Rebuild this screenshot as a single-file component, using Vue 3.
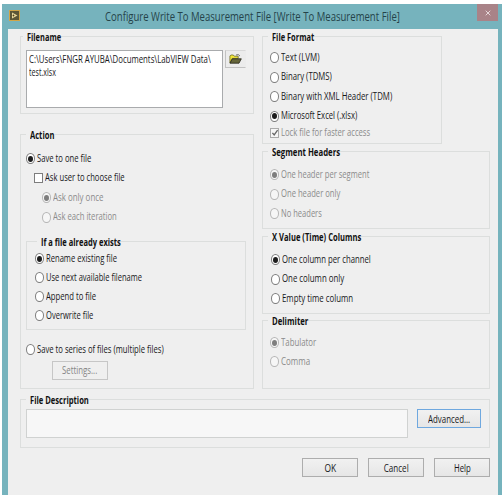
<template>
  <div class="window">
    <header class="titlebar">
      <svg class="app-icon" viewBox="0 0 11 11">
        <rect x="0.5" y="0.5" width="10" height="10" fill="#5d5636" stroke="#d0a548" />
        <path d="M3 2.5 L8.5 5.5 L3 8.5 Z" fill="#e9d79a" />
        <path d="M4.5 4.5v2M3.6 5.5h1.8" stroke="#4b3a16" stroke-width="0.8" />
      </svg>
      <h1><span v-fit="295">Configure Write To Measurement File [Write To Measurement File]</span></h1>
      <button class="close" type="button" aria-label="Close">
        <svg viewBox="0 0 6 6"><path d="M0.7 0.7l4.6 4.6M5.3 0.7L0.7 5.3" stroke="#e6d6d8" /></svg>
      </button>
    </header>

    <main class="content">
      <div class="columns">
        <div class="left">
          <section class="group filename">
            <h2><span v-fit="34">Filename</span></h2>
            <div class="file-row">
              <div class="path">
                <p><span v-fit="182">C:\Users\FNGR AYUBA\Documents\LabVIEW Data\</span></p>
                <p><span v-fit="27">test.xlsx</span></p>
              </div>
              <button class="browse" type="button" aria-label="Browse">
                <svg viewBox="0 0 13 10">
                  <path d="M0.9 8.8V2L1.9 1H4.3L5.3 2.2H9.2V4.4H3.2Z" fill="#f0e63a" stroke="#5b5a1c" stroke-width="0.7" />
                  <path d="M1 9.2L3.4 4.8H12.3L10 9.2Z" fill="#66663a" stroke="#26261a" stroke-width="0.8" />
                  <path d="M7 1Q9.5 -0.3 11 2" fill="none" stroke="#444" stroke-width="0.7" />
                </svg>
              </button>
            </div>
          </section>

          <section class="group action">
            <h2><span v-fit="24.5">Action</span></h2>
            <label class="option save-one">
              <i class="radio checked"></i><span v-fit="54">Save to one file</span>
            </label>
            <label class="option ask-user">
              <i class="checkbox"></i><span v-fit="80">Ask user to choose file</span>
            </label>
            <div class="ask-options">
              <label class="option disabled"><i class="radio checked"></i><span v-fit="50.5">Ask only once</span></label>
              <label class="option disabled"><i class="radio"></i><span v-fit="63.5">Ask each iteration</span></label>
            </div>
            <section class="group exists">
              <h2><span v-fit="79.5">If a file already exists</span></h2>
              <label v-for="item in existsOptions" :key="item.text" class="option">
                <i class="radio" :class="{ checked: item.checked }"></i>
                <span v-fit="item.width">{{ item.text }}</span>
              </label>
            </section>
            <label class="option save-series">
              <i class="radio"></i><span v-fit="127">Save to series of files (multiple files)</span>
            </label>
            <button class="btn settings" type="button" disabled><span v-fit="35">Settings...</span></button>
          </section>
        </div>

        <div class="right">
          <section v-for="group in groups" :key="group.title" class="group" :class="group.name">
            <h2><span v-fit="group.width">{{ group.title }}</span></h2>
            <label
              v-for="item in group.items"
              :key="item.text"
              class="option"
              :class="{ disabled: group.disabled }"
            >
              <i class="radio" :class="{ checked: item.checked }"></i>
              <span v-fit="item.width">{{ item.text }}</span>
            </label>
            <label v-if="group.name === 'format'" class="option disabled lock">
              <i class="checkbox">
                <svg viewBox="0 0 8 8"><path d="M1.4 3.8L3.2 6L6.6 1.2" fill="none" stroke="#666" stroke-width="1.3" /></svg>
              </i>
              <span v-fit="89">Lock file for faster access</span>
            </label>
          </section>
        </div>
      </div>

      <section class="group description">
        <h2><span v-fit="58.5">File Description</span></h2>
        <div class="description-row">
          <div class="description-box"></div>
          <button class="btn advanced" type="button"><span v-fit="42">Advanced...</span></button>
        </div>
      </section>

      <footer class="footer">
        <button class="btn" type="button"><span v-fit="12">OK</span></button>
        <button class="btn" type="button"><span v-fit="24.5">Cancel</span></button>
        <button class="btn" type="button"><span v-fit="17">Help</span></button>
      </footer>
    </main>
  </div>
</template>

<script setup>
// Condenses a caption to the given width in pixels
const vFit = {
  mounted(el, { value }) {
    el.style.transform = `scaleX(${value / el.offsetWidth})`;
  },
};

const existsOptions = [
  { text: "Rename existing file", width: 71, checked: true },
  { text: "Use next available filename", width: 96 },
  { text: "Append to file", width: 50.5 },
  { text: "Overwrite file", width: 47.5 },
];

const groups = [
  {
    name: "format",
    title: "File Format",
    width: 42,
    items: [
      { text: "Text (LVM)", width: 38.5 },
      { text: "Binary (TDMS)", width: 51 },
      { text: "Binary with XML Header (TDM)", width: 111 },
      { text: "Microsoft Excel (.xlsx)", width: 76, checked: true },
    ],
  },
  {
    name: "segment",
    title: "Segment Headers",
    width: 68,
    disabled: true,
    items: [
      { text: "One header per segment", width: 88, checked: true },
      { text: "One header only", width: 59 },
      { text: "No headers", width: 41 },
    ],
  },
  {
    name: "xvalue",
    title: "X Value (Time) Columns",
    width: 89,
    items: [
      { text: "One column per channel", width: 89, checked: true },
      { text: "One column only", width: 62 },
      { text: "Empty time column", width: 71 },
    ],
  },
  {
    name: "delimiter",
    title: "Delimiter",
    width: 36,
    disabled: true,
    items: [
      { text: "Tabulator", width: 35, checked: true },
      { text: "Comma", width: 29 },
    ],
  },
];
</script>

<style>
body {
  background: #fff;
}
</style>

<style scoped>
* {
  box-sizing: border-box;
}

.window {
  width: 500px;
  height: 491px;
  margin: 4px 0 0 2px;
  padding: 0 4px 0 6px;
  background: #76b3bd;
  font-family: "Open Sans", "Noto Sans", sans-serif;
  font-size: 10.5px;
  line-height: 14px;
  color: #17171a;
  overflow: hidden;
}

span {
  display: inline-block;
  white-space: nowrap;
  transform-origin: left center;
}

h1,
h2,
p {
  margin: 0;
}

.titlebar {
  display: flex;
  height: 25px;
}

.app-icon {
  width: 11px;
  height: 11px;
  margin: 6px 0 0 1px;
}

h1 {
  flex: 1;
  width: 0;
  margin: 3px 0 0 85px;
  font-size: 13px;
  font-weight: 400;
  line-height: 18px;
  color: #25434a;
}

.close {
  display: grid;
  place-items: center;
  width: 21px;
  height: 17px;
  padding: 0;
  border: 0;
  background: #a98388;
}

.close svg {
  width: 6px;
  height: 6px;
}

.content {
  height: 466px;
  padding: 7px 8px 0 12px;
  background: #efefef;
}

.columns {
  display: flex;
  gap: 8px;
}

.left {
  width: 234px;
}

.right {
  width: 228px;
}

.group {
  border: 1px solid #dcdedd;
}

h2 {
  width: fit-content;
  height: 14px;
  margin: -7px 0 0 3px;
  padding-left: 4px;
  background: linear-gradient(90deg, #efefef 10px, transparent 10px);
  font-size: 10.5px;
  font-weight: 700;
  line-height: 14px;
  color: #111;
}

h2 span {
  background: #efefef;
}

.filename {
  height: 78px;
}

.filename h2 {
  margin-left: 2px;
}

.file-row {
  display: flex;
  gap: 2px;
  margin: 6px 0 0 5px;
}

.path {
  width: 197px;
  height: 58px;
  padding: 2px 2px;
  border: 1px solid #a9abad;
  background: #fff;
}

.path p {
  height: 13px;
  line-height: 13px;
}

.browse {
  display: grid;
  place-items: center;
  width: 21px;
  height: 18px;
  padding: 0;
  border: 1px solid #c2c2c2;
  border-top-color: #d8d8d8;
  border-right-color: #ececec;
  background: #ececec;
}

.browse svg {
  width: 13px;
  height: 10px;
}

.option {
  display: flex;
  align-items: center;
  gap: 2px;
  height: 19.5px;
}

.option span {
  margin-top: -2px;
}

.radio,
.checkbox {
  flex: none;
  width: 9px;
  height: 10px;
  border: 1px solid #7d7d7d;
  background: #fff;
}

.radio {
  display: grid;
  place-items: center;
  height: 11px;
  border-radius: 50%;
}

.radio.checked::after {
  content: "";
  width: 5px;
  height: 6px;
  border-radius: 50%;
  background: #1d1d1d;
}

.disabled {
  color: #8b8b8b;
}

.disabled .radio {
  border-color: #b5b5b5;
  background: #f6f6f6;
}

.disabled .radio.checked::after {
  background: #7d7d7d;
}

.action {
  height: 255px;
  margin-top: 20px;
}

.action > h2 {
  margin-left: 5px;
}

.save-one {
  margin: 7px 0 0 5px;
}

.ask-user {
  margin-left: 13px;
}

.ask-options {
  margin-left: 21px;
}

.exists {
  width: 220px;
  height: 89px;
  margin: 14px 0 0 5px;
}

.exists h2 {
  margin-left: 10px;
}

.exists .option {
  height: 19px;
  margin-left: 8px;
}

.save-series {
  margin: 10px 0 0 5px;
}

.btn {
  display: flex;
  align-items: center;
  justify-content: center;
  width: 56px;
  height: 19px;
  padding: 0;
  border: 1px solid #adadad;
  background: linear-gradient(#f1f1f1, #e6e6e6);
  font: inherit;
  color: #17171a;
}

.btn span {
  transform-origin: center;
}

.settings {
  margin: 1px 0 0 31px;
  border-color: #c6c6c6;
  background: #efefef;
  color: #858585;
}

.right .group {
  margin-bottom: 7px;
}

.right h2 {
  margin-left: 5px;
}

.right .option {
  margin-left: 7px;
}

.format {
  width: 180px;
  height: 108px;
}

.format h2 + .option {
  margin-top: 4px;
}

.right .lock {
  height: 13px;
}

.checkbox svg {
  display: block;
  width: 8px;
  height: 8px;
}

.lock .checkbox {
  border-color: #aaa;
  background: #f6f6f6;
}

.segment {
  height: 78px;
}

.segment h2 + .option {
  margin-top: 6px;
}

.xvalue {
  height: 78px;
}

.xvalue h2 + .option {
  margin-top: 6px;
}

.right .xvalue .option {
  margin-left: 8px;
}

.right .delimiter {
  height: 69px;
  margin-top: -1px;
  margin-bottom: 0;
}

.delimiter h2 + .option {
  margin-top: 5px;
}

.delimiter .option {
  height: 19px;
}

.description {
  height: 49px;
  margin-top: 10px;
}

.description h2 {
  margin-left: 5px;
}

.description-row {
  display: flex;
  gap: 9px;
  margin: 2px 0 0 5px;
}

.description-box {
  width: 382px;
  height: 29px;
  border: 1px solid #d0d2d1;
  background: #f7f7f7;
}

.advanced {
  width: 64px;
  border-color: #6fa8df;
}

.footer {
  display: flex;
  justify-content: flex-end;
  gap: 10px;
  margin-top: 10px;
}
</style>
